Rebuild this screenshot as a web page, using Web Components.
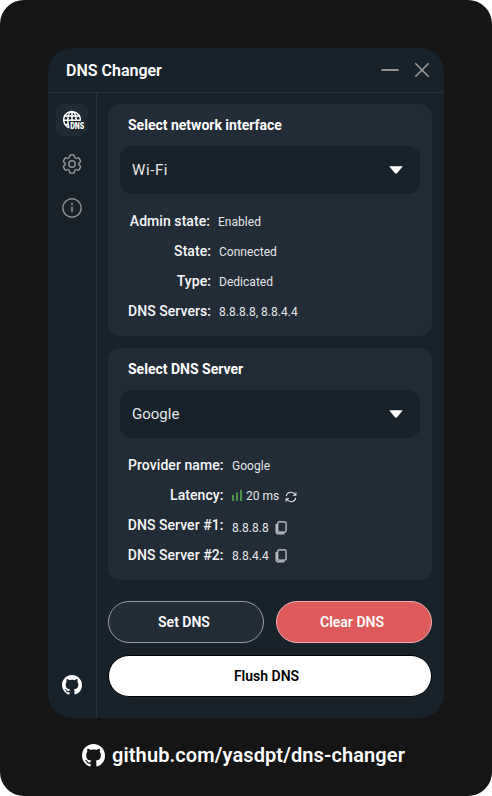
<!DOCTYPE html>
<html lang="en">
<head>
<meta charset="utf-8">
<title>DNS Changer</title>
<style>
html,body{margin:0;background:#fff}
body{font-family:Roboto,"Liberation Sans",sans-serif;color:#fff}
</style>
</head>
<body>
<dns-app></dns-app>
<script>
const define = (name, html, setup) => {
  const template = document.createElement('template');
  template.innerHTML = html;
  customElements.define(name, class extends HTMLElement {
    connectedCallback() {
      if (this.shadowRoot) return;
      const root = this.attachShadow({ mode: 'open' });
      root.append(template.content.cloneNode(true));
      if (setup) setup(this, root);
    }
  });
};

const icons = {
  github: ['0 0 16 16', '<path fill="#fff" d="M8 0C3.58 0 0 3.58 0 8c0 3.54 2.29 6.53 5.47 7.59.4.07.55-.17.55-.38 0-.19-.01-.82-.01-1.49-2.01.37-2.53-.49-2.69-.94-.09-.23-.48-.94-.82-1.13-.28-.15-.68-.52-.01-.53.63-.01 1.08.58 1.23.82.72 1.21 1.87.87 2.33.66.07-.52.28-.87.51-1.07-1.78-.2-3.64-.89-3.64-3.95 0-.87.31-1.59.82-2.15-.08-.2-.36-1.02.08-2.12 0 0 .67-.21 2.2.82.64-.18 1.32-.27 2-.27s1.36.09 2 .27c1.53-1.04 2.2-.82 2.2-.82.44 1.1.16 1.92.08 2.12.51.56.82 1.27.82 2.15 0 3.07-1.87 3.75-3.65 3.95.29.25.54.73.54 1.48 0 1.07-.01 1.93-.01 2.2 0 .21.15.46.55.38A8.01 8.01 0 0 0 16 8c0-4.42-3.58-8-8-8Z"/>'],
  globe: ['0 0 24 24', '<g fill="none" stroke="#fff" stroke-width="1.5"><path d="M20.4 12.7A8.4 8.4 0 1 0 9.4 19.9"/><path d="M16.3 12.7C16.3 7.5 14.6 3.8 12 3.8S7.8 7.5 7.8 12s.6 6 1.6 7.9"/><path d="M12 3.8v8.9M4.9 8h14.2M3.8 12.2h16.6M4.9 16.4h3.6"/></g><path d="M9.4 13.4H24v7.9H9.4Z" fill="#202a33"/><text x="10.2" y="20.5" font-family="Roboto,sans-serif" font-size="8.4" font-weight="900" fill="#fff" textLength="14" lengthAdjust="spacingAndGlyphs">DNS</text>'],
  gear: ['0 0 24 24', '<g fill="none" stroke="#8f8f8f" stroke-width="1.5" stroke-linejoin="round"><path d="M9.594 3.94c.09-.542.56-.94 1.11-.94h2.593c.55 0 1.02.398 1.11.94l.213 1.281c.063.374.313.686.645.87.074.04.147.083.22.127.325.196.72.257 1.075.124l1.217-.456a1.125 1.125 0 0 1 1.37.49l1.296 2.247a1.125 1.125 0 0 1-.26 1.431l-1.003.827c-.293.241-.438.613-.43.992a7.723 7.723 0 0 1 0 .255c-.008.378.137.75.43.991l1.004.827c.424.35.534.955.26 1.43l-1.298 2.247a1.125 1.125 0 0 1-1.369.491l-1.217-.456c-.355-.133-.75-.072-1.076.124a6.47 6.47 0 0 1-.22.128c-.331.183-.581.495-.644.869l-.213 1.281c-.09.543-.56.94-1.11.94h-2.594c-.55 0-1.019-.398-1.11-.94l-.213-1.281c-.062-.374-.312-.686-.644-.87a6.52 6.52 0 0 1-.22-.127c-.325-.196-.72-.257-1.076-.124l-1.217.456a1.125 1.125 0 0 1-1.369-.49l-1.297-2.247a1.125 1.125 0 0 1 .26-1.431l1.004-.827c.292-.24.437-.613.43-.991a6.932 6.932 0 0 1 0-.255c.007-.38-.138-.751-.43-.992l-1.004-.827a1.125 1.125 0 0 1-.26-1.43l1.297-2.247a1.125 1.125 0 0 1 1.37-.491l1.216.456c.356.133.751.072 1.076-.124.072-.044.146-.086.22-.128.332-.183.582-.495.644-.869l.214-1.28Z"/><circle cx="12" cy="12" r="3.2"/></g>'],
  info: ['0 0 24 24', '<circle cx="12" cy="12" r="9.2" fill="none" stroke="#8f8f8f" stroke-width="1.5"/><path d="M12 10.4v5.8" stroke="#8f8f8f" stroke-width="1.5"/><circle cx="12" cy="8" r="1" fill="#8f8f8f"/>'],
  minimize: ['0 0 20 20', '<path d="M1.5 10h17" stroke="#929292" stroke-width="2"/>'],
  close: ['0 0 20 20', '<path d="M3.3 3.3 16.7 16.7M16.7 3.3 3.3 16.7" stroke="#999" stroke-width="1.6"/>'],
  caret: ['0 0 16 10', '<path d="M2 1.2h12q.9 0 .3.8L9.2 7.9q-1.2 1.2-2.4 0L1.7 2Q1.1 1.2 2 1.2Z" fill="#fff"/>'],
  bars: ['0 0 12 12', '<path d="M1 5v6M5 2.5V11M9 0V11" stroke="#499447" stroke-width="2"/>'],
  refresh: ['0 0 12 12', '<g fill="none" stroke="#e4e6e8" stroke-width="1.1"><path d="M1.3 5.2A4.8 4.8 0 0 1 10.3 3.9M10.7 6.8A4.8 4.8 0 0 1 1.7 8.1"/><path d="M10.9 1.4v2.9H8M1.1 10.6V7.7H4"/></g>'],
  copy: ['0 0 12 14', '<g fill="none" stroke="#cfd2d5"><rect x="2.7" y=".8" width="8.4" height="10.4" rx="1.6" stroke-width="1.2"/><path d="M1.3 3v7.4Q1.3 12.7 3.6 12.7h5.8" stroke="#aeb3b8" stroke-width="1.7"/></g>']
};

define('dns-icon', '<style>:host{display:block;flex:none}svg{display:block;width:100%;height:100%;overflow:visible}</style>', (el, root) => {
  const [box, body] = icons[el.getAttribute('name')];
  root.innerHTML += `<svg viewBox="${box}">${body}</svg>`;
});

define('dns-titlebar', `<style>
:host{display:flex;align-items:center;height:44px;border-bottom:1px solid #28333d;padding:0 12px 0 18px;font-size:16px;font-weight:600;line-height:20px}
span{flex:1;padding-top:1px}
dns-icon{width:20px;height:20px}
dns-icon+dns-icon{margin-left:12px}
</style><span><slot></slot></span><dns-icon name="minimize"></dns-icon><dns-icon name="close"></dns-icon>`);

define('dns-sidebar', `<style>
:host{display:flex;flex-direction:column;align-items:center;gap:12px;box-sizing:border-box;width:49px;border-right:1px solid #28333d;padding:11px 0 23px}
.item{display:grid;place-items:center;width:32px;height:32px;border-radius:8px}
.on{background:#202a33}
.item dns-icon{width:24px;height:24px}
.git{width:20px;height:20px;margin-top:auto}
</style>
<div class="item on"><dns-icon name="globe"></dns-icon></div>
<div class="item"><dns-icon name="gear"></dns-icon></div>
<div class="item"><dns-icon name="info"></dns-icon></div>
<dns-icon class="git" name="github"></dns-icon>`);

define('dns-select', `<style>
:host{display:flex;align-items:center;justify-content:space-between;height:48px;box-sizing:border-box;border-radius:12px;background:#18222b;padding:0 16px 0 12px;font-size:15px;color:#e4e6e8}
dns-icon{width:16px;height:10px}
</style><span><slot></slot></span><dns-icon name="caret"></dns-icon>`);

define('dns-card', `<style>
:host{display:block;box-sizing:border-box;height:232px;border-radius:12px;background:#222c37;padding:12px}
h2{margin:0 0 12px 8px;font-size:14px;font-weight:700;line-height:18px}
.rows{margin-top:12px}
</style><h2></h2><slot name="select"></slot><div class="rows"><slot></slot></div>`, (el, root) => {
  root.querySelector('h2').textContent = el.getAttribute('heading');
});

define('dns-row', `<style>
:host{display:flex;align-items:center;height:30px;white-space:nowrap}
.label{width:var(--label,91px);text-align:right;font-size:14px;font-weight:500;letter-spacing:.06px;color:#f6f7f7;flex:none}
.value{display:flex;align-items:center;margin-left:var(--gap,8px);font-size:12px;letter-spacing:.03px;color:#e4e6e8;padding-top:var(--drop,1px)}
</style><span class="label"></span><span class="value"><slot></slot></span>`, (el, root) => {
  root.querySelector('.label').textContent = el.getAttribute('label');
});

define('dns-button', `<style>
:host{display:grid;place-items:center;box-sizing:border-box;height:42px;border-radius:21px;border:1px solid #969ba0;background:#222c37;font-size:14px;font-weight:600;color:#fff;padding-right:4px}
:host([kind=danger]){background:#df5b5b;border-color:#efadad}
:host([kind=light]){background:#fff;border-color:#000;color:#000;grid-column:1/-1;padding-right:7px}
</style><span><slot></slot></span>`);

define('dns-app', `<style>
:host{display:block;box-sizing:border-box;width:492px;height:796px;border-radius:24px;background:#151515;padding:48px 48px 0}
.window{display:flex;flex-direction:column;width:396px;height:670px;border-radius:24px;background:#18222b;overflow:hidden}
.body{display:flex;flex:1;min-height:0}
main{flex:1;padding:11px 12px 0 11px;display:flex;flex-direction:column;gap:12px}
.actions{display:grid;grid-template-columns:1fr 1fr;gap:12px;margin-top:9px}
.wifi{letter-spacing:.6px}
.first{--label:90px}
.server{--label:103.5px;--gap:8.5px}
.bars{width:12px;height:12px;margin-right:2px}
.refresh{width:12px;height:12px;margin:2px 0 0 6px}
.copy{width:12px;height:14px;margin-left:6px}
footer{display:flex;align-items:center;gap:7.5px;height:24px;margin:25px 0 0 33.5px;font-size:20px;font-weight:600;line-height:24px;letter-spacing:.11px}
footer dns-icon{width:23px;height:23px}
</style>
<div class="window">
<dns-titlebar>DNS Changer</dns-titlebar>
<div class="body">
<dns-sidebar></dns-sidebar>
<main>
<dns-card heading="Select network interface">
<dns-select class="wifi" slot="select">Wi-Fi</dns-select>
<dns-row class="first" label="Admin state:">Enabled</dns-row>
<dns-row label="State:">Connected</dns-row>
<dns-row label="Type:">Dedicated</dns-row>
<dns-row label="DNS Servers:">8.8.8.8, 8.8.4.4</dns-row>
</dns-card>
<dns-card heading="Select DNS Server">
<dns-select slot="select">Google</dns-select>
<dns-row class="server" label="Provider name:">Google</dns-row>
<dns-row class="server" label="Latency:"><dns-icon class="bars" name="bars"></dns-icon>20 ms<dns-icon class="refresh" name="refresh"></dns-icon></dns-row>
<dns-row class="server" style="--drop:5px" label="DNS Server #1:">8.8.8.8<dns-icon class="copy" name="copy"></dns-icon></dns-row>
<dns-row class="server" style="--drop:2px" label="DNS Server #2:">8.8.4.4<dns-icon class="copy" name="copy"></dns-icon></dns-row>
</dns-card>
<div class="actions">
<dns-button>Set DNS</dns-button>
<dns-button kind="danger">Clear DNS</dns-button>
<dns-button kind="light">Flush DNS</dns-button>
</div>
</main>
</div>
</div>
<footer><dns-icon name="github"></dns-icon><span>github.com/yasdpt/dns-changer</span></footer>`);
</script>
</body>
</html>
